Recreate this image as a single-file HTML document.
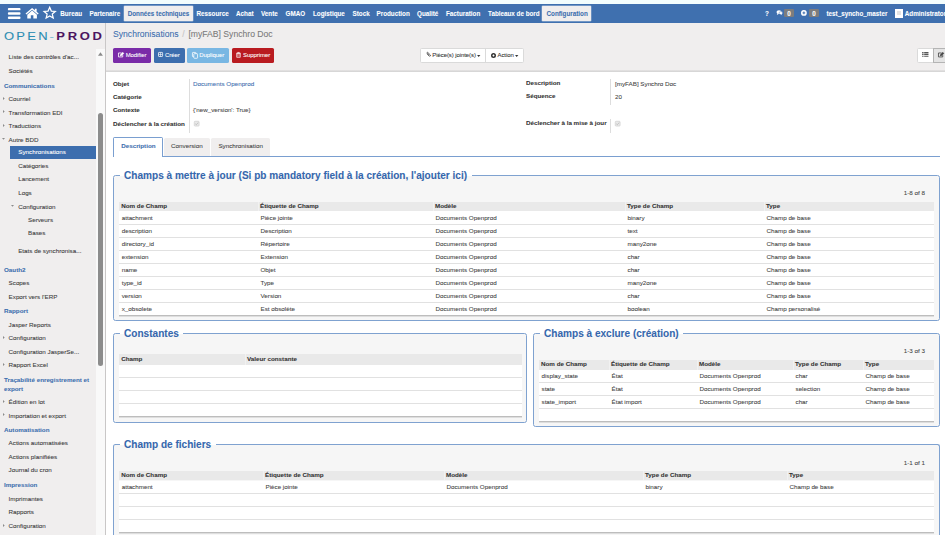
<!DOCTYPE html><html lang="fr"><head><meta charset="utf-8"><title>Synchronisations - [myFAB] Synchro Doc</title><style>
*{box-sizing:border-box;margin:0;padding:0}
html,body{width:945px;height:535px;overflow:hidden;background:#fff}
body{font-family:"Liberation Sans",Arial,sans-serif;font-size:6.25px;color:#4c4c4c;position:relative;-webkit-text-stroke:0.07px}
.t{position:absolute;white-space:nowrap}
.r{position:absolute}
.b{font-weight:bold}
.nav{color:#fff;font-weight:bold;font-size:6.3px}
.sec{color:#3d6eae;font-weight:bold}
.sb{color:#3a3a3a}
.lbl{font-weight:bold;color:#333}
.lnk{color:#3d6eae}
.th{font-weight:bold;color:#333}
.td{color:#444}
.leg{font-weight:bold;color:#3567ad;font-size:10.06px;background:linear-gradient(#fff 50%,#f6f6f6 50%);padding:0 4.6px}
svg{position:absolute;overflow:visible}
</style></head><body>
<div class="r " style="left:0px;top:0px;width:945px;height:4px;background:#f3fdfd"></div>
<div class="r " style="left:0px;top:4px;width:945px;height:19px;background:#3f70af"></div>
<div class="r " style="left:0px;top:23px;width:945px;height:48px;background:#f0eeee"></div>
<div class="r " style="left:0px;top:23px;width:105px;height:512px;background:#f0eeee"></div>
<div class="r " style="left:105px;top:23px;width:1px;height:512px;background:#c9c7c7"></div>
<div class="r " style="left:106px;top:69.6px;width:839px;height:2.4px;background:linear-gradient(#e6e4e4,#d2d2d2)"></div>
<div class="r " style="left:106px;top:72px;width:839px;height:463px;background:#fff"></div>
<svg style="left:0;top:0" width="30" height="24" viewBox="0 0 30 24"><rect x="7.9" y="8.05" width="12.6" height="2.3" rx="0.9" fill="#fff"/><rect x="7.9" y="12.35" width="12.6" height="2.3" rx="0.9" fill="#fff"/><rect x="7.9" y="16.6" width="12.6" height="2.3" rx="0.9" fill="#fff"/></svg>
<svg style="left:24.5px;top:7.3px" width="14.2" height="12" viewBox="0 0 28 23"><path d="M14 1.5 L1 12.5 L2.8 14.4 L14 5 L25.2 14.4 L27 12.5 L23 9 L23 3 L19.5 3 L19.5 6 Z" fill="#fff"/><path d="M14 6.8 L4.5 14.8 L4.5 22.5 L11.5 22.5 L11.5 16 L16.5 16 L16.5 22.5 L23.5 22.5 L23.5 14.8 Z" fill="#fff"/></svg>
<svg style="left:43.4px;top:6.3px" width="13.4" height="13.2" viewBox="0 0 28 27"><path d="M14 2.5 L17.4 10.3 L25.8 11 L19.4 16.6 L21.4 24.8 L14 20.4 L6.6 24.8 L8.6 16.6 L2.2 11 L10.6 10.3 Z" fill="none" stroke="#fff" stroke-width="2.6" stroke-linejoin="miter"/></svg>
<div class="r " style="left:123.6px;top:6px;width:69.4px;height:15px;background:#f0eeee;border-radius:0.8px;box-shadow:0 0 0 0.4px rgba(255,255,255,.55)"></div>
<div class="r " style="left:542.2px;top:6px;width:48.8px;height:15px;background:#f0eeee;border-radius:0.8px;box-shadow:0 0 0 0.4px rgba(255,255,255,.55)"></div>
<div class="t nav" style="left:60.3px;top:8.7px;line-height:10px;">Bureau</div>
<div class="t nav" style="left:89.5px;top:8.7px;line-height:10px;">Partenaire</div>
<div class="t nav" style="left:127.7px;top:8.7px;line-height:10px;color:#3d6eae">Données techniques</div>
<div class="t nav" style="left:196.5px;top:8.7px;line-height:10px;">Ressource</div>
<div class="t nav" style="left:236px;top:8.7px;line-height:10px;">Achat</div>
<div class="t nav" style="left:261px;top:8.7px;line-height:10px;">Vente</div>
<div class="t nav" style="left:285.5px;top:8.7px;line-height:10px;">GMAO</div>
<div class="t nav" style="left:313px;top:8.7px;line-height:10px;">Logistique</div>
<div class="t nav" style="left:352.5px;top:8.7px;line-height:10px;">Stock</div>
<div class="t nav" style="left:376.5px;top:8.7px;line-height:10px;">Production</div>
<div class="t nav" style="left:417px;top:8.7px;line-height:10px;">Qualité</div>
<div class="t nav" style="left:446px;top:8.7px;line-height:10px;">Facturation</div>
<div class="t nav" style="left:488px;top:8.7px;line-height:10px;">Tableaux de bord</div>
<div class="t nav" style="left:546.5px;top:8.7px;line-height:10px;color:#3d6eae">Configuration</div>
<div class="t nav" style="left:765px;top:8.7px;line-height:10px;">?</div>
<svg style="left:775.5px;top:9.8px" width="7.2" height="5.4" viewBox="0 0 15 13"><ellipse cx="6" cy="5" rx="6" ry="4.6" fill="#fff"/><path d="M2 8 L1 12 L6 9Z" fill="#fff"/><ellipse cx="10.5" cy="7.5" rx="4.5" ry="3.6" fill="#fff" stroke="#3d6eae" stroke-width="1"/><path d="M12 10 L14 12.6 L9.5 10.8Z" fill="#fff"/></svg>
<div class="r " style="left:784.2px;top:9px;width:9.6px;height:8.2px;background:#7d7d7d;border-radius:1.2px"></div>
<div class="t nav" style="left:787.3px;top:8.7px;line-height:10px;">0</div>
<svg style="left:801.4px;top:9.5px" width="5.8" height="5.8" viewBox="0 0 12 12"><circle cx="6" cy="6" r="6" fill="#fff"/><path d="M6 3.2V8.8M3.2 6H8.8" stroke="#3d6eae" stroke-width="2"/></svg>
<div class="r " style="left:809.4px;top:9px;width:9.4px;height:8.2px;background:#7d7d7d;border-radius:1.2px"></div>
<div class="t nav" style="left:812.3px;top:8.7px;line-height:10px;">0</div>
<div class="t nav" style="left:826.5px;top:8.7px;line-height:10px;">test_syncho_master</div>
<div class="r " style="left:894.6px;top:8.6px;width:8.4px;height:9.2px;background:#fff"></div>
<div class="r " style="left:896.6px;top:11.2px;width:4.4px;height:4px;background:#e4e4e4"></div>
<div class="t nav" style="left:904.8px;top:8.7px;line-height:10px;">Administrator</div>
<div class="t" style="left:3.8px;top:26.8px;line-height:18px;font-size:11.8px;letter-spacing:2.05px;color:#2a8cb2;transform:scaleX(1.1);transform-origin:0 0">OPEN<span style="color:#7cc0d2;letter-spacing:2.2px;margin-left:-0.2px">-</span><span style="color:#4b1460;font-weight:bold;letter-spacing:2.45px">PROD</span></div>
<div class="r " style="left:96px;top:49px;width:9px;height:486px;background:#f9f9f9"></div>
<div class="r " style="left:98px;top:113px;width:5px;height:253px;background:#8c8c8c;border-radius:2.5px"></div>
<svg style="left:98.1px;top:52.3px" width="4.9" height="4" viewBox="0 0 10 8"><path d="M5 0.5L10 7.5H0Z" fill="#8a8a8a"/></svg>
<div class="t sb" style="left:8.6px;top:52.2px;line-height:10px;">Liste des contrôles d'ac...</div>
<div class="t sb" style="left:8.6px;top:66px;line-height:10px;">Sociétés</div>
<div class="t sec" style="left:4px;top:80.5px;line-height:10px;">Communications</div>
<div class="t sb" style="left:8.6px;top:94px;line-height:10px;">Courriel</div>
<svg style="left:3px;top:96.8px" width="1.7" height="3" viewBox="0 0 4 7"><path d="M0 0L4 3.5L0 7Z" fill="#8a8a8a"/></svg>
<div class="t sb" style="left:8.6px;top:107.5px;line-height:10px;">Transformation EDI</div>
<svg style="left:3px;top:110.3px" width="1.7" height="3" viewBox="0 0 4 7"><path d="M0 0L4 3.5L0 7Z" fill="#8a8a8a"/></svg>
<div class="t sb" style="left:8.6px;top:121px;line-height:10px;">Traductions</div>
<svg style="left:3px;top:123.8px" width="1.7" height="3" viewBox="0 0 4 7"><path d="M0 0L4 3.5L0 7Z" fill="#8a8a8a"/></svg>
<div class="t sb" style="left:8.6px;top:134.5px;line-height:10px;">Autre BDD</div>
<svg style="left:1.7px;top:138.1px" width="3" height="1.7" viewBox="0 0 7 4"><path d="M0 0H7L3.5 4Z" fill="#8a8a8a"/></svg>
<div class="r " style="left:9.5px;top:146px;width:86.5px;height:12.5px;background:#3d6eae"></div>
<div class="t sb" style="left:18.3px;top:147.3px;line-height:10px;color:#fff">Synchronisations</div>
<div class="t sb" style="left:18.2px;top:161px;line-height:10px;">Catégories</div>
<div class="t sb" style="left:18.2px;top:174.1px;line-height:10px;">Lancement</div>
<div class="t sb" style="left:18.2px;top:188px;line-height:10px;">Logs</div>
<div class="t sb" style="left:18.2px;top:201.5px;line-height:10px;">Configuration</div>
<svg style="left:11.3px;top:205.1px" width="3" height="1.7" viewBox="0 0 7 4"><path d="M0 0H7L3.5 4Z" fill="#8a8a8a"/></svg>
<div class="t sb" style="left:28px;top:214.7px;line-height:10px;">Serveurs</div>
<div class="t sb" style="left:28px;top:227.5px;line-height:10px;">Bases</div>
<div class="t sb" style="left:18.2px;top:245.5px;line-height:10px;">Etats de synchronisa...</div>
<div class="t sec" style="left:4px;top:264.5px;line-height:10px;">Oauth2</div>
<div class="t sb" style="left:8.6px;top:278px;line-height:10px;">Scopes</div>
<div class="t sb" style="left:8.6px;top:292px;line-height:10px;">Export vers l'ERP</div>
<div class="t sec" style="left:4px;top:306px;line-height:10px;">Rapport</div>
<div class="t sb" style="left:8.6px;top:319.5px;line-height:10px;">Jasper Reports</div>
<div class="t sb" style="left:8.6px;top:333px;line-height:10px;">Configuration</div>
<svg style="left:3px;top:335.8px" width="1.7" height="3" viewBox="0 0 4 7"><path d="M0 0L4 3.5L0 7Z" fill="#8a8a8a"/></svg>
<div class="t sb" style="left:8.6px;top:346.5px;line-height:10px;">Configuration JasperSe...</div>
<div class="t sb" style="left:8.6px;top:360.4px;line-height:10px;">Rapport Excel</div>
<svg style="left:3px;top:363.2px" width="1.7" height="3" viewBox="0 0 4 7"><path d="M0 0L4 3.5L0 7Z" fill="#8a8a8a"/></svg>
<div class="t sec" style="left:4px;top:374.7px;line-height:10px;">Traçabilité enregistrement et</div>
<div class="t sec" style="left:4px;top:383.7px;line-height:10px;">export</div>
<div class="t sb" style="left:8.6px;top:397px;line-height:10px;">Édition en lot</div>
<svg style="left:3px;top:399.8px" width="1.7" height="3" viewBox="0 0 4 7"><path d="M0 0L4 3.5L0 7Z" fill="#8a8a8a"/></svg>
<div class="t sb" style="left:8.6px;top:410.5px;line-height:10px;">Importation et export</div>
<svg style="left:3px;top:413.3px" width="1.7" height="3" viewBox="0 0 4 7"><path d="M0 0L4 3.5L0 7Z" fill="#8a8a8a"/></svg>
<div class="t sec" style="left:4px;top:424.5px;line-height:10px;">Automatisation</div>
<div class="t sb" style="left:8.6px;top:438.1px;line-height:10px;">Actions automatisées</div>
<div class="t sb" style="left:8.6px;top:452px;line-height:10px;">Actions planifiées</div>
<div class="t sb" style="left:8.6px;top:465.1px;line-height:10px;">Journal du cron</div>
<div class="t sec" style="left:4px;top:480.4px;line-height:10px;">Impression</div>
<div class="t sb" style="left:8.6px;top:493.5px;line-height:10px;">Imprimantes</div>
<div class="t sb" style="left:8.6px;top:507px;line-height:10px;">Rapports</div>
<div class="t sb" style="left:8.6px;top:520.7px;line-height:10px;">Configuration</div>
<svg style="left:3px;top:523.5px" width="1.7" height="3" viewBox="0 0 4 7"><path d="M0 0L4 3.5L0 7Z" fill="#8a8a8a"/></svg>
<div class="t" style="left:113px;top:27.6px;line-height:12px;font-size:8.62px;color:#7a7a7a"><span style="color:#3d6eae">Synchronisations</span><span style="color:#c4c4c4;padding:0 3.9px 0 3.6px">/</span>[myFAB] Synchro Doc</div>
<div class="r " style="left:113px;top:48.1px;width:38.1px;height:14.8px;background:#7a2ca8;border-radius:1.6px"></div>
<div class="t " style="left:125.7px;top:49.9px;line-height:10px;color:#fff;font-size:6px;letter-spacing:-0.08px">Modifier</div>
<svg style="left:118.1px;top:52px" width="6.2" height="5.4" viewBox="0 0 12 10.5"><path d="M9.2 6V9.6H0.9V1.9H7" fill="none" stroke="#fff" stroke-width="1.6"/><path d="M3.9 7.9L4.5 5L9.3 0.2L11.8 2.7L7 7.5Z" fill="#fff" stroke="#fff" stroke-width="0.3"/></svg>
<div class="r " style="left:153.6px;top:48.1px;width:31.2px;height:14.8px;background:#3d6eae;border-radius:1.6px"></div>
<div class="t " style="left:165px;top:49.9px;line-height:10px;color:#fff;font-size:6px;letter-spacing:-0.08px">Créer</div>
<svg style="left:158.4px;top:52.1px" width="5.1" height="4.9" viewBox="0 0 10 10"><rect x="0.8" y="0.8" width="8.4" height="8.4" rx="1" fill="none" stroke="#fff" stroke-width="1.5"/><path d="M5 1V9M1 5H9" stroke="#fff" stroke-width="1.2"/></svg>
<div class="r " style="left:186.8px;top:48.1px;width:42.2px;height:14.8px;background:#79b7e3;border-radius:1.6px"></div>
<div class="t " style="left:199.3px;top:49.9px;line-height:10px;color:#fff;font-size:6px;letter-spacing:-0.08px">Dupliquer</div>
<svg style="left:191.9px;top:51.6px" width="6" height="6.7" viewBox="0 0 10 11.2"><rect x="0.7" y="0.7" width="6" height="7.2" rx="1" fill="none" stroke="#fff" stroke-width="1.3"/><rect x="3" y="2.8" width="6.3" height="7.7" rx="1" fill="#79b7e3" stroke="#fff" stroke-width="1.3"/></svg>
<div class="r " style="left:231.7px;top:48.1px;width:42.8px;height:14.8px;background:#b91b20;border-radius:1.6px"></div>
<div class="t " style="left:243.1px;top:49.9px;line-height:10px;color:#fff;font-size:6px;letter-spacing:-0.08px">Supprimer</div>
<svg style="left:236.4px;top:51.9px" width="5" height="5.7" viewBox="0 0 9 10.3"><path d="M0.3 2.4H8.7M3 2.2V0.8H6V2.2" fill="none" stroke="#fff" stroke-width="1.3"/><path d="M1.3 3.2H7.7V9.6H1.3Z" fill="none" stroke="#fff" stroke-width="1.3"/><path d="M3.3 4.4V8.4M5.7 4.4V8.4" stroke="#fff" stroke-width="0.9"/></svg>
<div class="r " style="left:420px;top:48.2px;width:103.5px;height:14.4px;background:#fff;border:0.7px solid #dadada;border-radius:1.6px"></div>
<div class="r " style="left:485px;top:48.2px;width:0.7px;height:14.4px;background:#dadada"></div>
<div class="t " style="left:432.3px;top:50.1px;line-height:10px;color:#333;font-size:6px;letter-spacing:-0.08px">Pièce(s) jointe(s)</div>
<svg style="left:426.1px;top:52.2px" width="5" height="5.4" viewBox="0 0 9.6 10"><path d="M2.2 3.2L6.2 7.6A1.5 1.5 0 0 0 8.4 5.6L3.6 0.9A1.1 1.1 0 0 0 2 2.5L5.8 6.3" fill="none" stroke="#3a3a3a" stroke-width="1.5"/></svg>
<svg style="left:477.3px;top:54.6px" width="3.4" height="1.9" viewBox="0 0 7 4"><path d="M0 0H7L3.5 4Z" fill="#333"/></svg>
<svg style="left:491px;top:52.7px" width="5" height="5" viewBox="0 0 10 10"><circle cx="5" cy="5" r="3.4" fill="none" stroke="#333" stroke-width="3.2"/><circle cx="5" cy="5" r="1.5" fill="#fff"/></svg>
<div class="t " style="left:497.5px;top:50.1px;line-height:10px;color:#333;font-size:6px;letter-spacing:-0.08px">Action</div>
<svg style="left:515px;top:54.6px" width="3.4" height="1.9" viewBox="0 0 7 4"><path d="M0 0H7L3.5 4Z" fill="#333"/></svg>
<div class="r " style="left:917px;top:48.3px;width:30px;height:14.3px;background:#fff;border:0.7px solid #dadada;border-radius:1.6px 0 0 1.6px"></div>
<div class="r " style="left:933px;top:48.3px;width:14px;height:14.3px;background:#e4e4e4;border:0.7px solid #b4b4b4"></div>
<svg style="left:922.1px;top:52.1px" width="6.6" height="4.9" viewBox="0 0 13 10"><path d="M0 1.3H3M0 5H3M0 8.7H3" stroke="#555" stroke-width="2.4"/><path d="M4.2 1.3H13M4.2 5H13M4.2 8.7H13" stroke="#555" stroke-width="2.4"/></svg>
<svg style="left:937.8px;top:52px" width="6.2" height="5.4" viewBox="0 0 12 10.5"><path d="M9.2 6V9.6H0.9V1.9H7" fill="none" stroke="#444" stroke-width="1.6"/><path d="M3.9 7.9L4.5 5L9.3 0.2L11.8 2.7L7 7.5Z" fill="#444" stroke="#444" stroke-width="0.3"/></svg>
<div class="t lbl" style="left:113px;top:79px;line-height:10px;">Objet</div>
<div class="t lbl" style="left:113px;top:92px;line-height:10px;">Catégorie</div>
<div class="t lbl" style="left:113px;top:104.7px;line-height:10px;">Contexte</div>
<div class="t lbl" style="left:113px;top:119.1px;line-height:10px;">Déclencher à la création</div>
<div class="r " style="left:189.1px;top:78.5px;width:0.6px;height:54px;background:#ddd"></div>
<div class="t lnk" style="left:193px;top:79px;line-height:10px;">Documents Openprod</div>
<div class="t td" style="left:193px;top:104.7px;line-height:10px;">{'new_version': True}</div>
<svg style="left:193.6px;top:121px" width="5.4" height="5.4" viewBox="0 0 10 10"><rect x="0.5" y="0.5" width="9" height="9" rx="1.5" fill="#e9e9e9" stroke="#c6c6c6" stroke-width="1"/><path d="M2.4 5.2L4.3 7L7.6 3" fill="none" stroke="#b5b5b5" stroke-width="1.4"/></svg>
<div class="t lbl" style="left:526px;top:77.7px;line-height:10px;">Description</div>
<div class="t lbl" style="left:526px;top:91px;line-height:10px;">Séquence</div>
<div class="t lbl" style="left:526px;top:118.3px;line-height:10px;">Déclencher à la mise à jour</div>
<div class="r " style="left:610px;top:79px;width:0.6px;height:25.5px;background:#ddd"></div>
<div class="r " style="left:610px;top:119px;width:0.6px;height:14px;background:#ddd"></div>
<div class="t td" style="left:615px;top:78.7px;line-height:10px;">[myFAB] Synchro Doc</div>
<div class="t td" style="left:615px;top:92.3px;line-height:10px;">20</div>
<svg style="left:615px;top:121px" width="5.4" height="5.4" viewBox="0 0 10 10"><rect x="0.5" y="0.5" width="9" height="9" rx="1.5" fill="#e9e9e9" stroke="#c6c6c6" stroke-width="1"/><path d="M2.4 5.2L4.3 7L7.6 3" fill="none" stroke="#b5b5b5" stroke-width="1.4"/></svg>
<div class="r " style="left:113px;top:156px;width:827px;height:1px;background:#7a9fd0"></div>
<div class="r " style="left:113px;top:137px;width:50px;height:20px;background:#fff;border:1px solid #7a9fd0;border-bottom:none;border-radius:1.8px 1.8px 0 0"></div>
<div class="r " style="left:164px;top:138px;width:46px;height:18px;background:#f0eeee;border-radius:1.6px 1.6px 0 0"></div>
<div class="r " style="left:211px;top:138px;width:59px;height:18px;background:#f0eeee;border-radius:1.6px 1.6px 0 0"></div>
<div class="t lnk b" style="left:121.2px;top:141.3px;line-height:10px;">Description</div>
<div class="t td" style="left:171.1px;top:141.3px;line-height:10px;">Conversion</div>
<div class="t td" style="left:218.4px;top:141.3px;line-height:10px;">Synchronisation</div>
<div class="r " style="left:113px;top:175px;width:827px;height:146px;background:#f6f6f6;border:0.9px solid #7fa2d0;border-radius:2.5px;"></div>
<div class="t leg" style="left:119.5px;top:168.9px;line-height:14px">Champs à mettre à jour (Si pb mandatory field à la création, l'ajouter ici)</div>
<div class="r " style="left:119px;top:201.5px;width:815px;height:9.7px;background:#e9e9e9"></div>
<div class="t th" style="left:121.2px;top:200.6px;line-height:10px;">Nom de Champ</div>
<div class="t th" style="left:260px;top:200.6px;line-height:10px;">Étiquette de Champ</div>
<div class="r " style="left:257.8px;top:201.5px;width:0.6px;height:9.7px;background:#f1f1f1"></div>
<div class="t th" style="left:435px;top:200.6px;line-height:10px;">Modèle</div>
<div class="r " style="left:432.8px;top:201.5px;width:0.6px;height:9.7px;background:#f1f1f1"></div>
<div class="t th" style="left:627px;top:200.6px;line-height:10px;">Type de Champ</div>
<div class="r " style="left:624.8px;top:201.5px;width:0.6px;height:9.7px;background:#f1f1f1"></div>
<div class="t th" style="left:766px;top:200.6px;line-height:10px;">Type</div>
<div class="r " style="left:763.8px;top:201.5px;width:0.6px;height:9.7px;background:#f1f1f1"></div>
<div class="r " style="left:119px;top:211.2px;width:815px;height:104px;background:#fff"></div>
<div class="r " style="left:119px;top:223.6px;width:815px;height:0.6px;background:#e1e1e1"></div>
<div class="t td" style="left:121.7px;top:212.55px;line-height:10px;">attachment</div>
<div class="t td" style="left:260.5px;top:212.55px;line-height:10px;">Pièce jointe</div>
<div class="t td" style="left:435.5px;top:212.55px;line-height:10px;">Documents Openprod</div>
<div class="t td" style="left:627.5px;top:212.55px;line-height:10px;">binary</div>
<div class="t td" style="left:766.5px;top:212.55px;line-height:10px;">Champ de base</div>
<div class="r " style="left:119px;top:236.6px;width:815px;height:0.6px;background:#e1e1e1"></div>
<div class="t td" style="left:121.7px;top:225.55px;line-height:10px;">description</div>
<div class="t td" style="left:260.5px;top:225.55px;line-height:10px;">Description</div>
<div class="t td" style="left:435.5px;top:225.55px;line-height:10px;">Documents Openprod</div>
<div class="t td" style="left:627.5px;top:225.55px;line-height:10px;">text</div>
<div class="t td" style="left:766.5px;top:225.55px;line-height:10px;">Champ de base</div>
<div class="r " style="left:119px;top:249.6px;width:815px;height:0.6px;background:#e1e1e1"></div>
<div class="t td" style="left:121.7px;top:238.55px;line-height:10px;">directory_id</div>
<div class="t td" style="left:260.5px;top:238.55px;line-height:10px;">Répertoire</div>
<div class="t td" style="left:435.5px;top:238.55px;line-height:10px;">Documents Openprod</div>
<div class="t td" style="left:627.5px;top:238.55px;line-height:10px;">many2one</div>
<div class="t td" style="left:766.5px;top:238.55px;line-height:10px;">Champ de base</div>
<div class="r " style="left:119px;top:262.6px;width:815px;height:0.6px;background:#e1e1e1"></div>
<div class="t td" style="left:121.7px;top:251.55px;line-height:10px;">extension</div>
<div class="t td" style="left:260.5px;top:251.55px;line-height:10px;">Extension</div>
<div class="t td" style="left:435.5px;top:251.55px;line-height:10px;">Documents Openprod</div>
<div class="t td" style="left:627.5px;top:251.55px;line-height:10px;">char</div>
<div class="t td" style="left:766.5px;top:251.55px;line-height:10px;">Champ de base</div>
<div class="r " style="left:119px;top:275.6px;width:815px;height:0.6px;background:#e1e1e1"></div>
<div class="t td" style="left:121.7px;top:264.55px;line-height:10px;">name</div>
<div class="t td" style="left:260.5px;top:264.55px;line-height:10px;">Objet</div>
<div class="t td" style="left:435.5px;top:264.55px;line-height:10px;">Documents Openprod</div>
<div class="t td" style="left:627.5px;top:264.55px;line-height:10px;">char</div>
<div class="t td" style="left:766.5px;top:264.55px;line-height:10px;">Champ de base</div>
<div class="r " style="left:119px;top:288.6px;width:815px;height:0.6px;background:#e1e1e1"></div>
<div class="t td" style="left:121.7px;top:277.55px;line-height:10px;">type_id</div>
<div class="t td" style="left:260.5px;top:277.55px;line-height:10px;">Type</div>
<div class="t td" style="left:435.5px;top:277.55px;line-height:10px;">Documents Openprod</div>
<div class="t td" style="left:627.5px;top:277.55px;line-height:10px;">many2one</div>
<div class="t td" style="left:766.5px;top:277.55px;line-height:10px;">Champ de base</div>
<div class="r " style="left:119px;top:301.6px;width:815px;height:0.6px;background:#e1e1e1"></div>
<div class="t td" style="left:121.7px;top:290.55px;line-height:10px;">version</div>
<div class="t td" style="left:260.5px;top:290.55px;line-height:10px;">Version</div>
<div class="t td" style="left:435.5px;top:290.55px;line-height:10px;">Documents Openprod</div>
<div class="t td" style="left:627.5px;top:290.55px;line-height:10px;">char</div>
<div class="t td" style="left:766.5px;top:290.55px;line-height:10px;">Champ de base</div>
<div class="r " style="left:119px;top:314.6px;width:815px;height:0.6px;background:#e1e1e1"></div>
<div class="t td" style="left:121.7px;top:303.55px;line-height:10px;">x_obsolete</div>
<div class="t td" style="left:260.5px;top:303.55px;line-height:10px;">Est obsolète</div>
<div class="t td" style="left:435.5px;top:303.55px;line-height:10px;">Documents Openprod</div>
<div class="t td" style="left:627.5px;top:303.55px;line-height:10px;">boolean</div>
<div class="t td" style="left:766.5px;top:303.55px;line-height:10px;">Champ personalisé</div>
<div class="r " style="left:119px;top:315px;width:815px;height:1px;background:#bdbdbd"></div>
<div class="r " style="left:119px;top:316px;width:815px;height:1px;background:#dedede"></div>
<div class="t td" style="left:903px;top:188px;line-height:10px;width:22px;text-align:right">1-8 of 8</div>
<div class="r " style="left:113px;top:333px;width:414px;height:90px;background:#f6f6f6;border:0.9px solid #7fa2d0;border-radius:2.5px;"></div>
<div class="t leg" style="left:119.5px;top:326.9px;line-height:14px">Constantes</div>
<div class="r " style="left:119px;top:354px;width:402.5px;height:10.6px;background:#e9e9e9"></div>
<div class="t th" style="left:121.2px;top:353.55px;line-height:10px;">Champ</div>
<div class="t th" style="left:247px;top:353.55px;line-height:10px;">Valeur constante</div>
<div class="r " style="left:244.8px;top:354px;width:0.6px;height:10.6px;background:#f1f1f1"></div>
<div class="r " style="left:119px;top:364.6px;width:402.5px;height:52.4px;background:#fff"></div>
<div class="r " style="left:119px;top:377.1px;width:402.5px;height:0.6px;background:#e1e1e1"></div>
<div class="r " style="left:119px;top:390.2px;width:402.5px;height:0.6px;background:#e1e1e1"></div>
<div class="r " style="left:119px;top:403.3px;width:402.5px;height:0.6px;background:#e1e1e1"></div>
<div class="r " style="left:119px;top:416.4px;width:402.5px;height:0.6px;background:#e1e1e1"></div>
<div class="r " style="left:119px;top:416px;width:402.5px;height:1px;background:#bdbdbd"></div>
<div class="r " style="left:119px;top:417px;width:402.5px;height:1px;background:#dedede"></div>
<div class="r " style="left:533px;top:333px;width:407px;height:94px;background:#f6f6f6;border:0.9px solid #7fa2d0;border-radius:2.5px;"></div>
<div class="t leg" style="left:539.5px;top:326.9px;line-height:14px">Champs à exclure (création)</div>
<div class="r " style="left:539px;top:359.9px;width:395px;height:9.7px;background:#e9e9e9"></div>
<div class="t th" style="left:541px;top:359px;line-height:10px;">Nom de Champ</div>
<div class="t th" style="left:611px;top:359px;line-height:10px;">Étiquette de Champ</div>
<div class="r " style="left:608.8px;top:359.9px;width:0.6px;height:9.7px;background:#f1f1f1"></div>
<div class="t th" style="left:699px;top:359px;line-height:10px;">Modèle</div>
<div class="r " style="left:696.8px;top:359.9px;width:0.6px;height:9.7px;background:#f1f1f1"></div>
<div class="t th" style="left:795px;top:359px;line-height:10px;">Type de Champ</div>
<div class="r " style="left:792.8px;top:359.9px;width:0.6px;height:9.7px;background:#f1f1f1"></div>
<div class="t th" style="left:865px;top:359px;line-height:10px;">Type</div>
<div class="r " style="left:862.8px;top:359.9px;width:0.6px;height:9.7px;background:#f1f1f1"></div>
<div class="r " style="left:539px;top:369.6px;width:395px;height:52px;background:#fff"></div>
<div class="r " style="left:539px;top:382px;width:395px;height:0.6px;background:#e1e1e1"></div>
<div class="t td" style="left:541.5px;top:370.95px;line-height:10px;">display_state</div>
<div class="t td" style="left:611.5px;top:370.95px;line-height:10px;">État</div>
<div class="t td" style="left:699.5px;top:370.95px;line-height:10px;">Documents Openprod</div>
<div class="t td" style="left:795.5px;top:370.95px;line-height:10px;">char</div>
<div class="t td" style="left:865.5px;top:370.95px;line-height:10px;">Champ de base</div>
<div class="r " style="left:539px;top:395px;width:395px;height:0.6px;background:#e1e1e1"></div>
<div class="t td" style="left:541.5px;top:383.95px;line-height:10px;">state</div>
<div class="t td" style="left:611.5px;top:383.95px;line-height:10px;">État</div>
<div class="t td" style="left:699.5px;top:383.95px;line-height:10px;">Documents Openprod</div>
<div class="t td" style="left:795.5px;top:383.95px;line-height:10px;">selection</div>
<div class="t td" style="left:865.5px;top:383.95px;line-height:10px;">Champ de base</div>
<div class="r " style="left:539px;top:408px;width:395px;height:0.6px;background:#e1e1e1"></div>
<div class="t td" style="left:541.5px;top:396.95px;line-height:10px;">state_import</div>
<div class="t td" style="left:611.5px;top:396.95px;line-height:10px;">État import</div>
<div class="t td" style="left:699.5px;top:396.95px;line-height:10px;">Documents Openprod</div>
<div class="t td" style="left:795.5px;top:396.95px;line-height:10px;">char</div>
<div class="t td" style="left:865.5px;top:396.95px;line-height:10px;">Champ de base</div>
<div class="r " style="left:539px;top:421px;width:395px;height:0.6px;background:#e1e1e1"></div>
<div class="r " style="left:539px;top:421px;width:395px;height:1px;background:#bdbdbd"></div>
<div class="r " style="left:539px;top:422px;width:395px;height:1px;background:#dedede"></div>
<div class="t td" style="left:903px;top:346.3px;line-height:10px;width:22px;text-align:right">1-3 of 3</div>
<div class="r " style="left:113px;top:444px;width:827px;height:100px;background:#f6f6f6;border:0.9px solid #7fa2d0;border-radius:2.5px;border-bottom:none;border-radius:2.5px 2.5px 0 0;"></div>
<div class="t leg" style="left:119.5px;top:437.9px;line-height:14px">Champ de fichiers</div>
<div class="r " style="left:119px;top:470.8px;width:815px;height:9.7px;background:#e9e9e9"></div>
<div class="t th" style="left:121.2px;top:469.9px;line-height:10px;">Nom de Champ</div>
<div class="t th" style="left:265px;top:469.9px;line-height:10px;">Étiquette de Champ</div>
<div class="r " style="left:262.8px;top:470.8px;width:0.6px;height:9.7px;background:#f1f1f1"></div>
<div class="t th" style="left:446px;top:469.9px;line-height:10px;">Modèle</div>
<div class="r " style="left:443.8px;top:470.8px;width:0.6px;height:9.7px;background:#f1f1f1"></div>
<div class="t th" style="left:645px;top:469.9px;line-height:10px;">Type de Champ</div>
<div class="r " style="left:642.8px;top:470.8px;width:0.6px;height:9.7px;background:#f1f1f1"></div>
<div class="t th" style="left:789px;top:469.9px;line-height:10px;">Type</div>
<div class="r " style="left:786.8px;top:470.8px;width:0.6px;height:9.7px;background:#f1f1f1"></div>
<div class="r " style="left:119px;top:480.5px;width:815px;height:52px;background:#fff"></div>
<div class="r " style="left:119px;top:492.9px;width:815px;height:0.6px;background:#e1e1e1"></div>
<div class="t td" style="left:121.7px;top:481.85px;line-height:10px;">attachment</div>
<div class="t td" style="left:265.5px;top:481.85px;line-height:10px;">Pièce jointe</div>
<div class="t td" style="left:446.5px;top:481.85px;line-height:10px;">Documents Openprod</div>
<div class="t td" style="left:645.5px;top:481.85px;line-height:10px;">binary</div>
<div class="t td" style="left:789.5px;top:481.85px;line-height:10px;">Champ de base</div>
<div class="r " style="left:119px;top:505.9px;width:815px;height:0.6px;background:#e1e1e1"></div>
<div class="r " style="left:119px;top:518.9px;width:815px;height:0.6px;background:#e1e1e1"></div>
<div class="r " style="left:119px;top:531.9px;width:815px;height:0.6px;background:#e1e1e1"></div>
<div class="r " style="left:119px;top:532px;width:815px;height:1px;background:#bdbdbd"></div>
<div class="r " style="left:119px;top:533px;width:815px;height:1px;background:#dedede"></div>
<div class="t td" style="left:903px;top:457.7px;line-height:10px;width:22px;text-align:right">1-1 of 1</div>
</body></html>
